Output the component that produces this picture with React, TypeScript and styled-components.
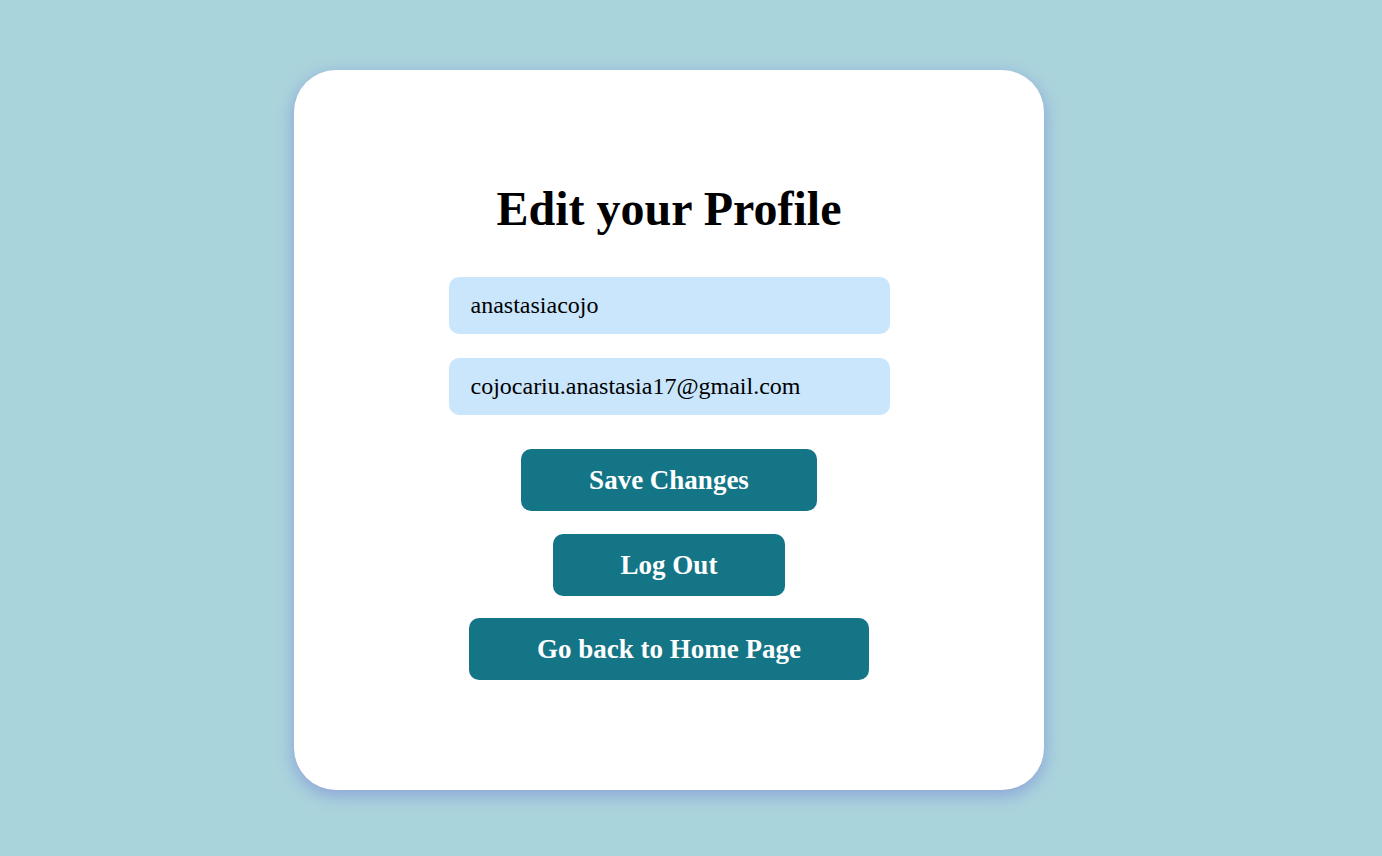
import styled, { createGlobalStyle } from "styled-components";

const GlobalStyle = createGlobalStyle`
  html, body {
    margin: 0;
    padding: 0;
    background: #aad4dc;
    font-family: "Liberation Serif", "Times New Roman", serif;
  }
`;

const Page = styled.main`
  min-height: 856px;
  display: flex;
  justify-content: center;
  padding: 70px 44px 0 0;
  box-sizing: border-box;
`;

const Card = styled.section`
  width: 750px;
  height: 720px;
  box-sizing: border-box;
  background: white;
  border-radius: 42px;
  box-shadow: 0px 5px 18px #8aa0d8;
  display: flex;
  flex-direction: column;
  align-items: center;
  padding-top: 111px;
`;

const Title = styled.h1`
  font-size: 48px;
  font-weight: 700;
  line-height: 55px;
  margin: 0 0 41px 0;
  color: black;
`;

const Field = styled.input`
  width: 441px;
  height: 57px;
  box-sizing: border-box;
  border: none;
  outline: none;
  border-radius: 10px;
  background: #c9e6fc;
  padding: 0 22px;
  font-family: "Liberation Serif", "Times New Roman", serif;
  font-size: 24px;
  color: black;
  margin-bottom: 24px;

  &:last-of-type {
    margin-bottom: 34px;
  }
`;

const Button = styled.button`
  height: 62px;
  box-sizing: border-box;
  border: none;
  border-radius: 10px;
  background: #147587;
  color: white;
  font-family: "Liberation Serif", "Times New Roman", serif;
  font-size: 27px;
  font-weight: 700;
  padding: 0 68px;
  margin-bottom: 23px;
  cursor: pointer;

  &:nth-of-type(2) {
    margin-bottom: 22px;
  }
`;

export default function App() {
  return (
    <>
      <GlobalStyle />
      <Page>
        <Card>
          <Title>Edit your Profile</Title>
          <Field type="text" defaultValue="anastasiacojo" />
          <Field type="email" defaultValue="cojocariu.anastasia17@gmail.com" />
          <Button>Save Changes</Button>
          <Button>Log Out</Button>
          <Button>Go back to Home Page</Button>
        </Card>
      </Page>
    </>
  );
}
